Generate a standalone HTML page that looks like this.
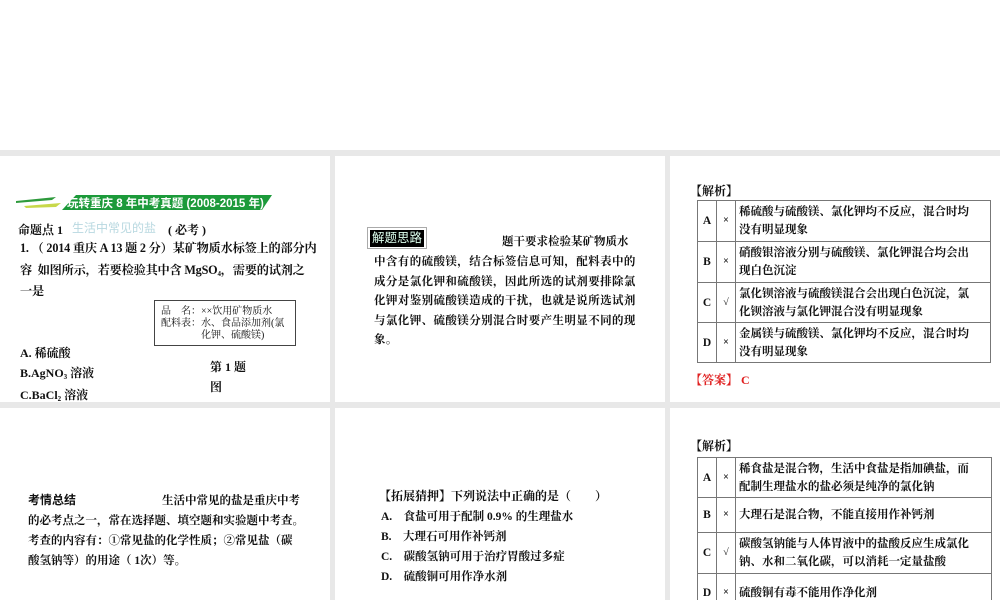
<html style="overflow:hidden"><head><style>
html,body{overflow:hidden}
body{margin:0;width:1000px;height:600px;background:#e8e8e8;position:relative;font-family:"Liberation Serif","Noto Serif CJK SC",serif;color:#111}
.p{position:absolute;background:#fff}
.a{position:absolute;white-space:nowrap}
sub{line-height:0;vertical-align:-2px;font-size:7px}
table{position:absolute;border-collapse:collapse;font-size:11.5px}
td{border:1px solid #777;padding:0 3px;line-height:18px;white-space:nowrap}
td.l{width:12px;text-align:center;font-weight:bold}
td.m{width:12px;text-align:center;font-size:10px}
.s{font-family:"Liberation Sans","Noto Sans CJK SC",sans-serif}
</style></head><body>
<div class="p" style="left:0;top:0;width:1000px;height:150px"></div>
<div class="p" style="left:0;top:156px;width:330px;height:246px"></div>
<div class="p" style="left:335px;top:156px;width:330px;height:246px"></div>
<div class="p" style="left:670px;top:156px;width:330px;height:246px"></div>
<div class="p" style="left:0;top:408px;width:330px;height:192px"></div>
<div class="p" style="left:335px;top:408px;width:330px;height:192px"></div>
<div class="p" style="left:670px;top:408px;width:330px;height:192px"></div>

<svg style="position:absolute;left:16px;top:194px" width="256" height="18">
<path d="M0 7 L40 3 L36 6 L0 9Z" fill="#2e9a3c"/><path d="M8 12 L45 9 L40 13 L10 14Z" fill="#c8d84a"/>
<polygon points="60,1 256,1 246,16 46,16" fill="#1c9a3a"/>
</svg>
<div class="a s" style="left:67px;top:195px;font-size:11.5px;color:#fff;font-weight:bold">玩转重庆 8 年中考真题 (2008-2015 年)</div>
<div class="a" style="left:18px;top:221px;font-size:12px;font-weight:bold">命题点 1</div>
<div class="a s" style="left:72px;top:219px;font-size:12px;color:#b8d8e0">生活中常见的盐</div>
<div class="a" style="left:168px;top:221px;font-size:12px;font-weight:bold">( 必考 )</div>
<div class="a" style="left:20px;top:238px;font-size:12.2px;font-weight:bold;line-height:21.5px;letter-spacing:-0.2px">1. （ 2014 重庆 A 13 题 2 分）某矿物质水标签上的部分内<br>容 &nbsp;如图所示，若要检验其中含 MgSO<sub>4</sub>，需要的试剂之<br>一是</div>
<div style="position:absolute;left:154px;top:300px;width:142px;height:46px;border:1px solid #444;font-size:10px;line-height:12px;padding:5px 0 0 6px;box-sizing:border-box">品　名：××饮用矿物质水<br>配料表：水、食品添加剂(氯<br>　　　　化钾、硫酸镁)</div>
<div class="a" style="left:20px;top:344px;font-size:12px;font-weight:bold">A. 稀硫酸</div>
<div class="a" style="left:20px;top:364px;font-size:12px;font-weight:bold">B.AgNO<sub>3</sub> 溶液</div>
<div class="a" style="left:20px;top:386px;font-size:12px;font-weight:bold">C.BaCl<sub>2</sub> 溶液</div>
<div class="a" style="left:210px;top:358px;font-size:12px;font-weight:bold">第 1 题</div>
<div class="a" style="left:210px;top:378px;font-size:12px;font-weight:bold">图</div>

<div style="position:absolute;left:367px;top:227px;width:60px;height:22px;border:1px solid #aaa;box-sizing:border-box;padding:2px"><div class="s" style="background:#000;color:#dfe;font-size:12.5px;line-height:17px;text-align:center">解题思路</div></div>
<div class="a" style="left:502px;top:233px;font-size:11.5px;font-weight:bold">题干要求检验某矿物质水</div>
<div class="a" style="left:374px;top:253px;font-size:11.5px;font-weight:bold;line-height:19.5px;letter-spacing:0.4px">中含有的硫酸镁，结合标签信息可知，配料表中的<br>成分是氯化钾和硫酸镁，因此所选的试剂要排除氯<br>化钾对鉴别硫酸镁造成的干扰，也就是说所选试剂<br>与氯化钾、硫酸镁分别混合时要产生明显不同的现<br>象。</div>

<div class="a" style="left:690px;top:182px;font-size:12px;font-weight:bold">【解析】</div>
<table style="left:697px;top:200px;width:294px;font-weight:bold">
<tr style="height:41px"><td class="l">A</td><td class="m">×</td><td>稀硫酸与硫酸镁、氯化钾均不反应，混合时均<br>没有明显现象</td></tr>
<tr style="height:41px"><td class="l">B</td><td class="m">×</td><td>硝酸银溶液分别与硫酸镁、氯化钾混合均会出<br>现白色沉淀</td></tr>
<tr style="height:40px"><td class="l">C</td><td class="m">√</td><td>氯化钡溶液与硫酸镁混合会出现白色沉淀，氯<br>化钡溶液与氯化钾混合没有明显现象</td></tr>
<tr style="height:40px"><td class="l">D</td><td class="m">×</td><td>金属镁与硫酸镁、氯化钾均不反应，混合时均<br>没有明显现象</td></tr>
</table>
<div class="a" style="left:690px;top:371px;font-size:12px;font-weight:bold;color:#e02020">【答案】 C</div>

<div class="a s" style="left:28px;top:491px;font-size:12px;font-weight:bold">考情总结</div>
<div class="a" style="left:162px;top:492px;font-size:11.5px;font-weight:bold">生活中常见的盐是重庆中考</div>
<div class="a" style="left:28px;top:511px;font-size:11.5px;font-weight:bold;line-height:20px">的必考点之一，常在选择题、填空题和实验题中考查。<br>考查的内容有：①常见盐的化学性质；②常见盐（碳<br>酸氢钠等）的用途（ 1次）等。</div>

<div class="a" style="left:379px;top:487px;font-size:12px;font-weight:bold">【拓展猜押】下列说法中正确的是（　　）</div>
<div class="a" style="left:381px;top:507px;font-size:11.5px;font-weight:bold;line-height:20px">A.　食盐可用于配制 0.9% 的生理盐水<br>B.　大理石可用作补钙剂<br>C.　碳酸氢钠可用于治疗胃酸过多症<br>D.　硫酸铜可用作净水剂</div>

<div class="a" style="left:690px;top:437px;font-size:12px;font-weight:bold">【解析】</div>
<table style="left:697px;top:457px;width:295px;font-weight:bold">
<tr style="height:40px"><td class="l">A</td><td class="m">×</td><td>稀食盐是混合物，生活中食盐是指加碘盐，而<br>配制生理盐水的盐必须是纯净的氯化钠</td></tr>
<tr style="height:35px"><td class="l">B</td><td class="m">×</td><td>大理石是混合物，不能直接用作补钙剂</td></tr>
<tr style="height:41px"><td class="l">C</td><td class="m">√</td><td>碳酸氢钠能与人体胃液中的盐酸反应生成氯化<br>钠、水和二氧化碳，可以消耗一定量盐酸</td></tr>
<tr style="height:38px"><td class="l">D</td><td class="m">×</td><td>硫酸铜有毒不能用作净化剂</td></tr>
</table>
</body></html>
